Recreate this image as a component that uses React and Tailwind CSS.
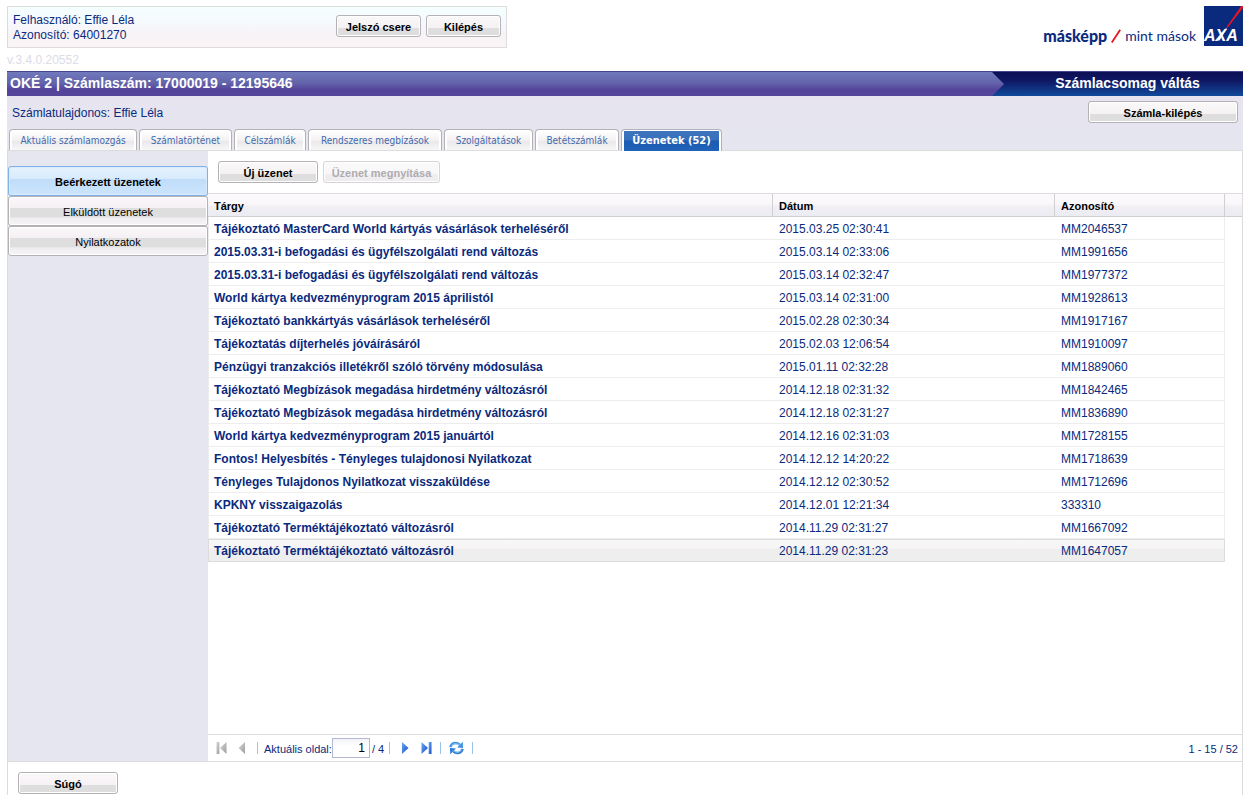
import React, { useState } from "react";

const TABS = [
  { label: "Aktuális számlamozgás", width: "w-32" },
  { label: "Számlatörténet", width: "w-[93px]" },
  { label: "Célszámlák", width: "w-18" },
  { label: "Rendszeres megbízások", width: "w-[134px]" },
  { label: "Szolgáltatások", width: "w-[89px]" },
  { label: "Betétszámlák", width: "w-[84px]" },
  { label: "Üzenetek (52)", width: "w-[101px]", active: true },
];

const FOLDERS = ["Beérkezett üzenetek", "Elküldött üzenetek", "Nyilatkozatok"];

const MESSAGES = [
  ["Tájékoztató MasterCard World kártyás vásárlások terheléséről", "2015.03.25 02:30:41", "MM2046537"],
  ["2015.03.31-i befogadási és ügyfélszolgálati rend változás", "2015.03.14 02:33:06", "MM1991656"],
  ["2015.03.31-i befogadási és ügyfélszolgálati rend változás", "2015.03.14 02:32:47", "MM1977372"],
  ["World kártya kedvezményprogram 2015 áprilistól", "2015.03.14 02:31:00", "MM1928613"],
  ["Tájékoztató bankkártyás vásárlások terheléséről", "2015.02.28 02:30:34", "MM1917167"],
  ["Tájékoztatás díjterhelés jóváírásáról", "2015.02.03 12:06:54", "MM1910097"],
  ["Pénzügyi tranzakciós illetékről szóló törvény módosulása", "2015.01.11 02:32:28", "MM1889060"],
  ["Tájékoztató Megbízások megadása hirdetmény változásról", "2014.12.18 02:31:32", "MM1842465"],
  ["Tájékoztató Megbízások megadása hirdetmény változásról", "2014.12.18 02:31:27", "MM1836890"],
  ["World kártya kedvezményprogram 2015 januártól", "2014.12.16 02:31:03", "MM1728155"],
  ["Fontos! Helyesbítés - Tényleges tulajdonosi Nyilatkozat", "2014.12.12 14:20:22", "MM1718639"],
  ["Tényleges Tulajdonos Nyilatkozat visszaküldése", "2014.12.12 02:30:52", "MM1712696"],
  ["KPKNY visszaigazolás", "2014.12.01 12:21:34", "333310"],
  ["Tájékoztató Terméktájékoztató változásról", "2014.11.29 02:31:27", "MM1667092"],
  ["Tájékoztató Terméktájékoztató változásról", "2014.11.29 02:31:23", "MM1647057"],
];

function Button({ width, disabled, children }) {
  const look = disabled
    ? "border-[#d6d4d6] text-[#aeacae] bg-[linear-gradient(#fbfafb,#f8f6f8_60%,#efedef_60%)]"
    : "border-[#b4b2b4] text-black bg-[linear-gradient(#fbf8fa,#f5f1f4_60%,#dedede_60%)]";
  return (
    <button
      type="button"
      disabled={disabled}
      className={`h-[22px] shrink-0 whitespace-nowrap rounded-[3px] border pt-px text-[11px] leading-5 font-bold shadow-[inset_0_0_0_1px_#ffffff] ${look} ${width}`}
    >
      {children}
    </button>
  );
}

function Logo() {
  return (
    <div className="flex items-start text-[#0a2a7d]">
      <div className="flex items-center gap-1 pt-5">
        <span className="font-[Lato,sans-serif] text-base leading-5 font-black">másképp</span>
        <svg width="10" height="14" viewBox="0 0 10 14" aria-hidden="true">
          <path d="M0.8 13.5 L9.2 0.8" stroke="#e8131d" strokeWidth="1.8" fill="none" />
        </svg>
        <span className="font-[Lato,sans-serif] text-sm leading-5">mint mások</span>
      </div>
      <svg className="ml-2" width="39" height="40" viewBox="0 0 39 40" role="img" aria-label="AXA">
        <rect width="39" height="40" fill="#0a2a7d" />
        <path d="M39 0 L37.2 0 L22.2 21.5 L23.8 21.5 L39 1.8 Z" fill="#f0141e" />
        <path d="M21.4 22.5 L23.1 22.5 L15.5 34.5 L13.4 34.5 Z" fill="#ffffff" />
        <text
          x="0"
          y="35"
          fill="#ffffff"
          fontFamily="'Liberation Sans', sans-serif"
          fontSize="16"
          fontWeight="700"
          fontStyle="italic"
        >
          AXA
        </text>
      </svg>
    </div>
  );
}

function Separator() {
  return <span className="h-3 w-px shrink-0 bg-[#9ec3ea]" aria-hidden="true" />;
}

function Shade({ id, from, to }) {
  return (
    <defs>
      <linearGradient id={id} x1="0" y1="0" x2="1" y2="1">
        <stop offset="0" stopColor={from} />
        <stop offset="1" stopColor={to} />
      </linearGradient>
    </defs>
  );
}

function FirstIcon({ id, from, to }) {
  return (
    <svg width="11" height="12" viewBox="0 0 11 12" fill={`url(#${id})`}>
      <Shade id={id} from={from} to={to} />
      <path d="M0.5 0h2.8v12h-2.8z" />
      <path d="M10.5 0v12L4 6z" />
    </svg>
  );
}

function PrevIcon({ id, from, to }) {
  return (
    <svg width="7" height="12" viewBox="0 0 7 12" fill={`url(#${id})`}>
      <Shade id={id} from={from} to={to} />
      <path d="M7 0v12L0.5 6z" />
    </svg>
  );
}

function RefreshIcon() {
  return (
    <svg width="15" height="14" viewBox="0 0 15 14">
      <path d="M1.6 6.2 C2 2.6 7 0.4 10.6 3.6" fill="none" stroke="#3f93e0" strokeWidth="2.6" />
      <path d="M13.8 0.8 L14 7 L8 6.4 Z" fill="#3f93e0" />
      <path d="M13.4 7.8 C13 11.4 8 13.6 4.4 10.4" fill="none" stroke="#2f7fd2" strokeWidth="2.6" />
      <path d="M1.2 13.2 L1 7 L7 7.6 Z" fill="#2f7fd2" />
      <path d="M2.4 5.2 C3.6 2.8 7.4 1.8 9.8 4" fill="none" stroke="#a9d6fa" strokeWidth="0.9" />
      <path d="M12.6 8.8 C11.4 11.2 7.6 12.2 5.2 10" fill="none" stroke="#a9d6fa" strokeWidth="0.9" />
    </svg>
  );
}

function Tabs() {
  return (
    <nav className="flex gap-0.5 pl-0.5" aria-label="Számla">
      {TABS.map((t) => (
        <button
          key={t.label}
          type="button"
          aria-current={t.active ? "page" : undefined}
          className={`flex rounded-t-[4px] border border-b-0 border-[#b3b1b5] bg-white px-0.5 pt-px ${t.width} ${t.active ? "-mb-px h-[22px]" : "h-[21px]"}`}
        >
          <span
            className={`h-full w-full whitespace-nowrap font-['DejaVu_Sans_Condensed','DejaVu_Sans',sans-serif] leading-5 ${
              t.active
                ? "bg-[linear-gradient(#3d74bd,#3870bb_45%,#1c5bb0_50%,#1f63ba)] text-[11px] font-bold text-white"
                : "bg-[linear-gradient(#ffffff,#f3f0f2_50%,#ebe8eb_55%,#f8f7f8)] text-[10px] text-[#3f6aac]"
            }`}
          >
            {t.label}
          </span>
        </button>
      ))}
    </nav>
  );
}

function Folders() {
  return (
    <nav className="w-[200px] shrink-0 bg-[#e5e6f0] pt-[15px]" aria-label="Üzenetek">
      {FOLDERS.map((name, i) => (
        <button
          key={name}
          type="button"
          className={`block h-[30px] w-full rounded-[3px] border pt-px text-[11px] leading-7 text-black ${
            i === 0
              ? "border-[#7fb0e6] bg-[linear-gradient(#e4f1fd,#d8ebfd_42%,#bfdcf9_42%,#cde5fc)] font-bold shadow-[inset_0_0_0_1px_#d9ecff]"
              : "border-[#b4b2b4] bg-[linear-gradient(#fbf8fa,#f4f0f3_38%,#dedede_38%,#dedede_70%,#efedef_75%,#f6f4f6)] shadow-[inset_0_0_0_1px_#ffffff]"
          }`}
        >
          {name}
        </button>
      ))}
    </nav>
  );
}

function MessageTable({ selected, onSelect }) {
  const head = "h-[23px] border-b border-[#d0d0d0] pt-0.5 pl-1.5 text-left text-[11px] font-bold text-black";
  return (
    <table className="w-full table-fixed border-separate border-spacing-0">
      <colgroup>
        <col />
        <col className="w-[282px]" />
        <col className="w-[170px]" />
        <col className="w-[17px]" />
      </colgroup>
      <thead>
        <tr className="bg-[linear-gradient(#fdfafd,#faf7fa_45%,#f1eff4_55%,#ebebf3)]">
          <th className={`${head} border-r`}>Tárgy</th>
          <th className={`${head} border-r`}>Dátum</th>
          <th className={`${head} border-r`}>Azonosító</th>
          <td className="border-b border-[#d0d0d0]" />
        </tr>
      </thead>
      <tbody>
        {MESSAGES.map(([subject, date, id], i) => {
          const tone =
            i === selected
              ? "border-y border-[#dcdcdc] bg-[linear-gradient(#f8f7f8,#f6f3f5_45%,#eeeeee_45%)]"
              : "border-b border-[#ededed] pt-0.5";
          return (
            <tr key={id} onClick={() => onSelect(i)} className="text-xs text-[#0a2a7d]">
              <td className={`h-[23px] truncate border-l pl-[5px] font-bold ${tone}`}>{subject}</td>
              <td className={`pl-1.5 ${tone}`}>{date}</td>
              <td className={`border-r pl-1.5 ${tone}`}>{id}</td>
              <td />
            </tr>
          );
        })}
      </tbody>
    </table>
  );
}

function Pager() {
  return (
    <div className="flex h-[27px] items-center border-t border-[#dcdcdc] pr-1 pl-2 text-[11px] text-[#0a2a7d]">
      <button type="button" disabled aria-label="Első oldal">
        <FirstIcon id="first" from="#d8d8d8" to="#9c9c9c" />
      </button>
      <button type="button" disabled aria-label="Előző oldal" className="ml-[11px]">
        <PrevIcon id="prev" from="#d8d8d8" to="#9c9c9c" />
      </button>
      <div className="ml-3 flex items-center gap-1.5">
        <Separator />
        <label htmlFor="page" className="pt-0.5">
          Aktuális oldal:
        </label>
      </div>
      <input
        id="page"
        defaultValue="1"
        className="h-5 w-[38px] border border-[#b3b8d3] bg-[linear-gradient(#f3f3f7,#ffffff_40%)] pr-1 text-right text-xs text-black"
      />
      <span className="ml-0.5 pt-0.5">/ 4</span>
      <div className="ml-[5px] flex items-center gap-3">
        <Separator />
        <button type="button" aria-label="Következő oldal" className="rotate-180">
          <PrevIcon id="next" from="#1746c4" to="#69aef5" />
        </button>
        <button type="button" aria-label="Utolsó oldal" className="rotate-180">
          <FirstIcon id="last" from="#1746c4" to="#69aef5" />
        </button>
      </div>
      <div className="ml-2 flex items-center gap-2">
        <Separator />
        <button type="button" aria-label="Frissítés">
          <RefreshIcon />
        </button>
        <Separator />
      </div>
      <span className="ml-auto pt-0.5">1 - 15 / 52</span>
    </div>
  );
}

export default function App() {
  const [selected, setSelected] = useState(14);
  return (
    <div className="flex min-h-screen flex-col bg-white pt-1.5 pr-2 pl-[7px] font-['Liberation_Sans',Arial,sans-serif] text-xs text-[#0a2a7d]">
      <header className="flex items-start justify-between">
        <div className="w-[500px]">
          <div className="flex h-[42px] items-start border border-[#dcdcdc] bg-[linear-gradient(#f5fffe,#f5faff_35%,#f8f3f6_65%,#faf4f6)] pt-1.5 pr-[5px] pl-[5px]">
            <p className="leading-[15px]">
              Felhasználó: Effie Léla
              <br />
              Azonosító: 64001270
            </p>
            <div className="ml-auto flex gap-[5px] pt-0.5">
              <Button width="w-[85px]">Jelszó csere</Button>
              <Button width="w-[75px]">Kilépés</Button>
            </div>
          </div>
          <p className="h-[23px] leading-6 text-[#dcdbe6]">v.3.4.0.20552</p>
        </div>
        <Logo />
      </header>

      <div className="flex h-[25px] justify-between border-t border-[#46458f] bg-[linear-gradient(#7079bb,#6464ab_45%,#54449a_75%,#54449a)] text-sm leading-[22px] font-bold text-white">
        <h1 className="pl-[3px]">OKÉ 2 | Számlaszám: 17000019 - 12195646</h1>
        <a
          href="#valtas"
          className="h-full w-[251px] bg-[linear-gradient(#0b0f55,#0f1762_35%,#10499b)] pl-5 text-center [clip-path:polygon(0_0,100%_0,100%_100%,0_100%,12px_50%)]"
        >
          Számlacsomag váltás
        </a>
      </div>

      <div className="bg-[linear-gradient(#e7e4ef,#e5e6f0)]">
        <div className="flex h-[33px] items-start justify-between pt-[5px] pr-[5px] pl-[5px]">
          <p className="leading-6">Számlatulajdonos: Effie Léla</p>
          <Button width="w-[150px]">Számla-kilépés</Button>
        </div>
        <div className="border-b border-[#dcdcdc]">
          <Tabs />
        </div>
      </div>

      <main className="flex flex-1 border border-t-0 border-[#dcdcdc]">
        <Folders />
        <section className="flex min-w-0 flex-1 flex-col">
          <div className="flex h-[43px] items-start gap-[5px] border-b border-[#dcdcdc] pt-2.5 pl-2.5">
            <Button width="w-[100px]">Új üzenet</Button>
            <Button width="w-[117px]" disabled>
              Üzenet megnyítása
            </Button>
          </div>
          <div className="flex-1">
            <MessageTable selected={selected} onSelect={setSelected} />
          </div>
          <Pager />
        </section>
      </main>

      <footer className="border-x border-[#dcdcdc] px-2.5 pt-2.5 pb-px">
        <Button width="w-[100px]">Súgó</Button>
      </footer>
    </div>
  );
}
